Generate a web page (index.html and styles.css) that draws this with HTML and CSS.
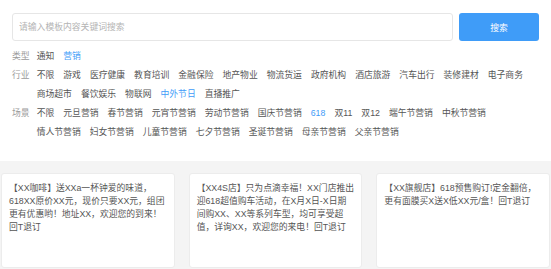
FILE: index.html
```html
<!DOCTYPE html>
<html>
<head>
<meta charset="utf-8">
<title>模板库</title>
<link rel="stylesheet" href="styles.css">
</head>
<body>
<div class="top">
	<div class="search">
		<input class="search-input" type="text" placeholder="请输入模板内容关键词搜索">
		<button class="search-btn">搜索</button>
	</div>
	<div class="filter">
		<span class="filter-label">类型</span>
		<div class="tags">
			<span class="tag">通知</span>
			<span class="tag active">营销</span>
		</div>
	</div>
	<div class="filter">
		<span class="filter-label">行业</span>
		<div class="tags">
			<span class="tag">不限</span>
			<span class="tag">游戏</span>
			<span class="tag">医疗健康</span>
			<span class="tag">教育培训</span>
			<span class="tag">金融保险</span>
			<span class="tag">地产物业</span>
			<span class="tag">物流货运</span>
			<span class="tag">政府机构</span>
			<span class="tag">酒店旅游</span>
			<span class="tag">汽车出行</span>
			<span class="tag">装修建材</span>
			<span class="tag">电子商务</span>
			<span class="tag">商场超市</span>
			<span class="tag">餐饮娱乐</span>
			<span class="tag">物联网</span>
			<span class="tag active">中外节日</span>
			<span class="tag">直播推广</span>
		</div>
	</div>
	<div class="filter">
		<span class="filter-label">场景</span>
		<div class="tags">
			<span class="tag">不限</span>
			<span class="tag">元旦营销</span>
			<span class="tag">春节营销</span>
			<span class="tag">元宵节营销</span>
			<span class="tag">劳动节营销</span>
			<span class="tag">国庆节营销</span>
			<span class="tag active">618</span>
			<span class="tag">双11</span>
			<span class="tag">双12</span>
			<span class="tag">端午节营销</span>
			<span class="tag">中秋节营销</span>
			<span class="tag">情人节营销</span>
			<span class="tag">妇女节营销</span>
			<span class="tag">儿童节营销</span>
			<span class="tag">七夕节营销</span>
			<span class="tag">圣诞节营销</span>
			<span class="tag">母亲节营销</span>
			<span class="tag">父亲节营销</span>
		</div>
	</div>
</div>

<div class="list">
	<div class="card">【XX咖啡】送XXa一杯钟爱的味道，618XX原价XX元，现价只要XX元，组团更有优惠哟！地址XX，欢迎您的到来！回T退订</div>
	<div class="card">【XX4S店】只为点滴幸福！XX门店推出迎618超值购车活动，在X月X日-X日期间购XX、XX等系列车型，均可享受超值，详询XX，欢迎您的来电！回T退订</div>
	<div class="card">【XX旗舰店】618预售购订!定金翻倍，更有面膜买X送X低XX元/盒！回T退订</div>
</div>
</body>
</html>
```

FILE: styles.css
```css
body {
	margin: 0;
	background-color: #fff;
	font-family: "Liberation Sans", "Noto Sans CJK SC", sans-serif;
	font-size: 8.8px;
	color: #555;
}
.top {
	padding: 13px 12px 19px;
}
.search {
	display: flex;
	gap: 6px;
	margin-bottom: 6px;
}
.search-input {
	flex: 1;
	height: 28px;
	box-sizing: border-box;
	border: 1px solid #e6e6e6;
	border-radius: 3px;
	padding: 0 6px;
	font-family: inherit;
	font-size: 8.8px;
	outline: none;
}
.search-input::placeholder {
	color: #b4b4b4;
}
.search-btn {
	width: 80px;
	height: 28px;
	border: none;
	border-radius: 3px;
	background-color: #3f9cf8;
	color: #fff;
	font-family: inherit;
	font-size: 8.8px;
}
.filter {
	display: flex;
	line-height: 19px;
}
.filter-label {
	flex: none;
	width: 24.7px;
	color: #9a9a9a;
}
.tags {
	flex: 1;
	display: flex;
	flex-wrap: wrap;
}
.tag {
	margin-right: 9px;
	color: #555;
	white-space: nowrap;
}
.tag.active {
	color: #3f9cf8;
}
.list {
	background-color: #f4f4f4;
	padding: 12px 1px 10px;
	display: grid;
	grid-template-columns: repeat(3, 1fr);
	gap: 14px;
}
.card {
	background-color: #fff;
	border: 1px solid #ececec;
	border-radius: 3px;
	height: 95px;
	box-sizing: border-box;
	padding: 8px 7px;
	line-height: 13px;
	color: #555;
}
```
